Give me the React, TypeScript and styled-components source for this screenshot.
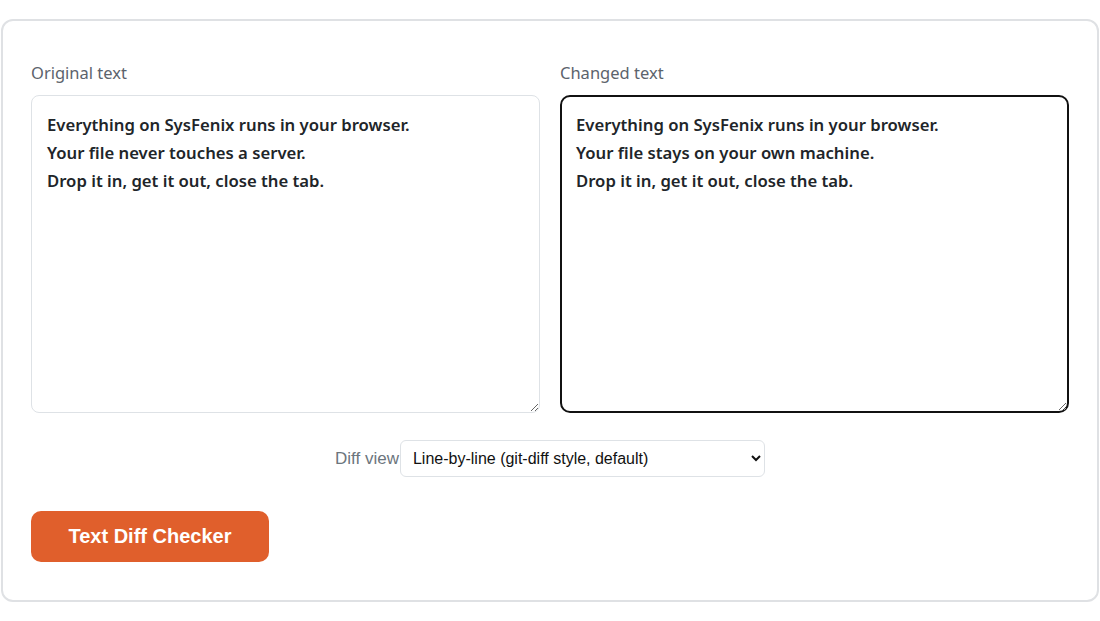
import React, { useState } from 'react';
import styled, { createGlobalStyle } from 'styled-components';

const GlobalStyle = createGlobalStyle`
  html, body { margin: 0; padding: 0; background: #ffffff; }
  * { box-sizing: border-box; }
`;

const Page = styled.div`
  padding: 19px 1px 0 1px;
  font-family: "Noto Sans", "Open Sans", sans-serif;
`;

const Card = styled.div`
  border: 2px solid #dfe1e4;
  border-radius: 12px;
  padding: 40px 28px 38px;
  background: #fff;
`;

const Columns = styled.div`
  display: grid;
  grid-template-columns: 1fr 1fr;
  gap: 20px;
`;

const Field = styled.div`
  display: flex;
  flex-direction: column;
`;

const Label = styled.label`
  font-size: 16.5px;
  line-height: 24px;
  color: #5c636c;
  margin-bottom: 10px;
`;

const TextBox = styled.textarea<{ $active?: boolean }>`
  height: 318px;
  width: 100%;
  font-family: "Noto Sans", "Open Sans", sans-serif;
  font-size: 16.7px;
  font-weight: 600;
  line-height: 28px;
  color: #212529;
  background: #fff;
  border: ${(p) => (p.$active ? '2px solid #111' : '1px solid #dee2e6')};
  border-radius: ${(p) => (p.$active ? '10px' : '8px')};
  padding: ${(p) => (p.$active ? '14px 14px' : '15px 15px')};
  outline: none;
  resize: vertical;
`;

const ViewRow = styled.div`
  display: flex;
  justify-content: center;
  align-items: center;
  margin-top: 27px;
`;

const ViewLabel = styled.label`
  font-family: "Liberation Sans", Arial, sans-serif;
  font-size: 17px;
  color: #6c757d;
  margin-right: 1px;
`;

const Select = styled.select`
  width: 365px;
  height: 37px;
  font-family: "Liberation Sans", Arial, sans-serif;
  font-size: 16px;
  color: #111;
  background: #fff;
  border: 1px solid #dee2e6;
  border-radius: 6px;
  padding: 0 8px;
`;

const Actions = styled.div`
  margin-top: 34px;
`;

const CheckButton = styled.button`
  width: 238px;
  height: 51px;
  border: none;
  border-radius: 10px;
  background: #e05f2c;
  color: #fff;
  font-family: "Liberation Sans", Arial, sans-serif;
  font-size: 20px;
  font-weight: 700;
  cursor: pointer;
`;

export default function App() {
  const [original, setOriginal] = useState(
    'Everything on SysFenix runs in your browser.\nYour file never touches a server.\nDrop it in, get it out, close the tab.'
  );
  const [changed, setChanged] = useState(
    'Everything on SysFenix runs in your browser.\nYour file stays on your own machine.\nDrop it in, get it out, close the tab.'
  );
  const [view, setView] = useState('line');

  return (
    <Page>
      <GlobalStyle />
      <Card>
        <Columns>
          <Field>
            <Label>Original text</Label>
            <TextBox value={original} onChange={(e) => setOriginal(e.target.value)} spellCheck={false} />
          </Field>
          <Field>
            <Label>Changed text</Label>
            <TextBox $active value={changed} onChange={(e) => setChanged(e.target.value)} spellCheck={false} />
          </Field>
        </Columns>
        <ViewRow>
          <ViewLabel>Diff view</ViewLabel>
          <Select value={view} onChange={(e) => setView(e.target.value)}>
            <option value="line">Line-by-line (git-diff style, default)</option>
            <option value="side">Side-by-side</option>
          </Select>
        </ViewRow>
        <Actions>
          <CheckButton>Text Diff Checker</CheckButton>
        </Actions>
      </Card>
    </Page>
  );
}
